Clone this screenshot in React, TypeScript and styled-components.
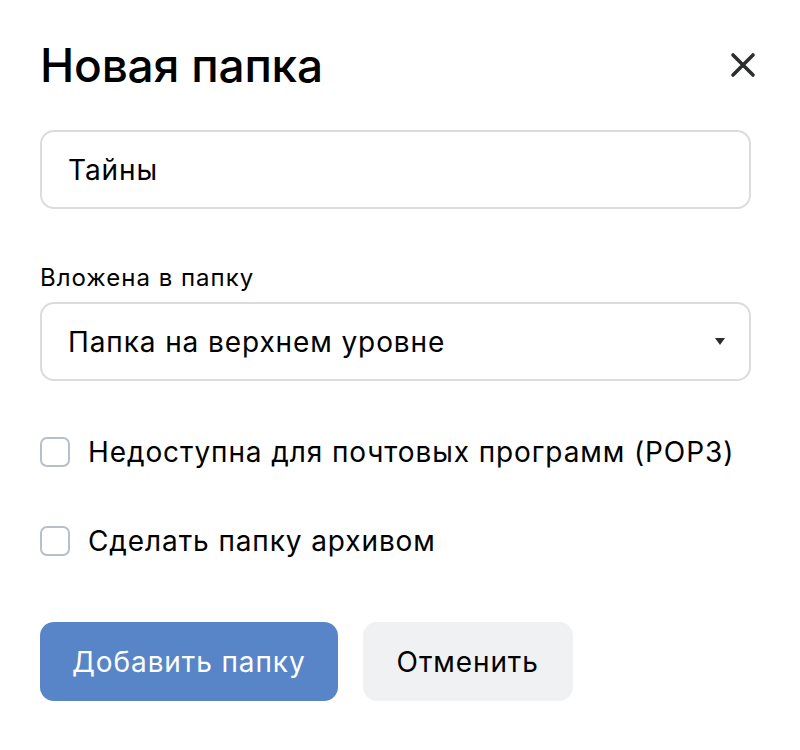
import * as React from "react"
import styled, { createGlobalStyle } from "styled-components"

const GlobalStyle = createGlobalStyle`
  body {
    margin: 0;
    background: #ffffff;
    font-family: Inter, Roboto, "Liberation Sans", sans-serif;
    color: #000000;
  }
`

const Dialog = styled.div`
  width: 800px;
  box-sizing: border-box;
  padding: 34px 49px 40px 40px;
  display: flex;
  flex-direction: column;
`

const Header = styled.div`
  display: flex;
  align-items: center;
  justify-content: space-between;
  height: 62px;
`

const Title = styled.h1`
  margin: 0;
  font-family: Inter, Roboto, sans-serif;
  font-size: 46px;
  font-weight: 500;
  letter-spacing: -0.2px;
`

const Close = styled.button`
  border: none;
  background: none;
  padding: 0;
  width: 32px;
  height: 32px;
  margin-right: -8px;
  display: flex;
  align-items: center;
  justify-content: center;
  cursor: pointer;
`

const Field = styled.div<{ top: number }>`
  margin-top: ${(p) => p.top}px;
  height: 79px;
  box-sizing: border-box;
  border: 2px solid #dcdcdc;
  border-radius: 14px;
  display: flex;
  align-items: center;
  padding: 0 26px;
  font-size: 28px;
  letter-spacing: 0.9px;
  color: #000;
`

const FieldText = styled.span`
  flex: 1;
`

const Label = styled.div`
  margin-top: 54px;
  font-size: 24px;
  line-height: 30px;
  letter-spacing: 1px;
  color: #000;
`

const Arrow = styled.span`
  width: 0;
  height: 0;
  border-left: 5px solid transparent;
  border-right: 5px solid transparent;
  border-top: 7px solid #2c2d2e;
  margin-right: -2px;
`

const CheckRow = styled.label<{ top: number }>`
  margin-top: ${(p) => p.top}px;
  display: flex;
  align-items: center;
  gap: 18px;
  font-size: 28px;
  letter-spacing: 0.9px;
  cursor: pointer;
`

const Box = styled.span`
  width: 30px;
  height: 30px;
  box-sizing: border-box;
  border: 2px solid #b8bfca;
  border-radius: 7px;
  flex-shrink: 0;
`

const Buttons = styled.div`
  margin-top: 64px;
  display: flex;
  gap: 25px;
`

const Button = styled.button<{ primary?: boolean }>`
  height: 79px;
  border: none;
  border-radius: 14px;
  padding: 0 ${(p) => (p.primary ? 32 : 34)}px;
  font-family: Inter, Roboto, sans-serif;
  font-size: 28px;
  letter-spacing: 0.9px;
  background: ${(p) => (p.primary ? "#5785c8" : "#f0f1f3")};
  color: ${(p) => (p.primary ? "#ffffff" : "#000000")};
  cursor: pointer;
`

export default function App() {
  return (
    <>
      <GlobalStyle />
      <Dialog>
        <Header>
          <Title>Новая папка</Title>
          <Close aria-label="close">
            <svg width="26" height="26" viewBox="0 0 26 26">
              <path
                d="M3 3 L23 23 M23 3 L3 23"
                stroke="#2c2d2e"
                strokeWidth="3.6"
                strokeLinecap="round"
              />
            </svg>
          </Close>
        </Header>
        <Field top={34}>
          <FieldText>Тайны</FieldText>
        </Field>
        <Label>Вложена в папку</Label>
        <Field top={9}>
          <FieldText>Папка на верхнем уровне</FieldText>
          <Arrow />
        </Field>
        <CheckRow top={54}>
          <Box />
          Недоступна для почтовых программ (POP3)
        </CheckRow>
        <CheckRow top={55}>
          <Box />
          Сделать папку архивом
        </CheckRow>
        <Buttons>
          <Button primary>Добавить папку</Button>
          <Button>Отменить</Button>
        </Buttons>
      </Dialog>
    </>
  )
}
